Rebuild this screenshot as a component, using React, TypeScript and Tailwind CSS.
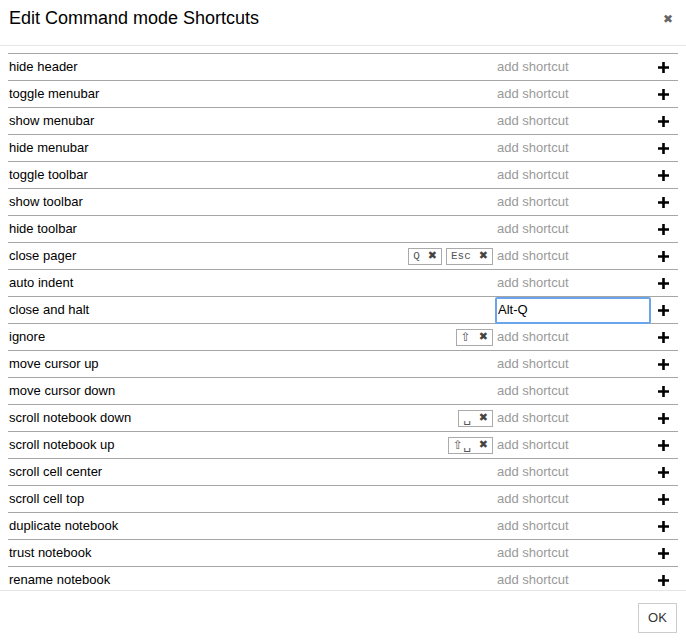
import React from "react";

type Row = { name: string; keys?: string[]; value?: string };

const rows: Row[] = [
  { name: "hide header" },
  { name: "toggle menubar" },
  { name: "show menubar" },
  { name: "hide menubar" },
  { name: "toggle toolbar" },
  { name: "show toolbar" },
  { name: "hide toolbar" },
  { name: "close pager", keys: ["Q", "Esc"] },
  { name: "auto indent" },
  { name: "close and halt", value: "Alt-Q" },
  { name: "ignore", keys: ["⇧"] },
  { name: "move cursor up" },
  { name: "move cursor down" },
  { name: "scroll notebook down", keys: ["␣"] },
  { name: "scroll notebook up", keys: ["⇧␣"] },
  { name: "scroll cell center" },
  { name: "scroll cell top" },
  { name: "duplicate notebook" },
  { name: "trust notebook" },
  { name: "rename notebook" },
];

function KeyBadge({ k }: { k: string }) {
  // symbol keys (shift / space) need a font that draws them at full size
  const symbol = /[^\x00-\x7f]/.test(k);
  return (
    <span className="flex h-[17px] items-center gap-[8px] border border-[#aaa] px-[4px] text-[#555]">
      {symbol ? (
        <span className="font-['DejaVu_Sans',sans-serif] text-[12px] leading-none">{k}</span>
      ) : (
        <span className="font-['Liberation_Mono',monospace] text-[11px]">{k}</span>
      )}
      <span className="font-['DejaVu_Sans',sans-serif] text-[11px] font-bold text-[#444]">✖</span>
    </span>
  );
}

function ShortcutRow({ row }: { row: Row }) {
  return (
    <div className="flex h-[27px] items-center border-t border-[#a6a6a6]">
      <span className="flex-1 pl-[1px] text-[13px] text-[#000]">{row.name}</span>
      {row.keys && (
        <div className="mr-[2px] flex gap-[4px]">
          {row.keys.map((k) => (
            <KeyBadge key={k} k={k} />
          ))}
        </div>
      )}
      {row.value ? (
        <div className="flex h-[27px] w-[156px] items-center rounded-[2px] border-2 border-[#6aa5ec] pl-[1px] text-[13px] text-[#000]">
          {row.value}
        </div>
      ) : (
        <div className="w-[156px] pl-[2px] text-[13px] text-[#999]">add shortcut</div>
      )}
      <div className="flex w-[27px] justify-center pr-[3px]">
        <svg width="11" height="11" viewBox="0 0 11 11">
          <path d="M4.2 0h2.6v4.2H11v2.6H6.8V11H4.2V6.8H0V4.2h4.2z" fill="#000" />
        </svg>
      </div>
    </div>
  );
}

export default function App() {
  return (
    <div className="flex h-[643px] w-[686px] flex-col bg-white font-['Liberation_Sans',Arial,sans-serif]">
      <div className="flex h-[46px] shrink-0 items-center justify-between border-b border-[#e5e5e5] pl-[9px] pr-[13px]">
        <h4 className="pb-[8px] text-[18px] text-[#000]">Edit Command mode Shortcuts</h4>
        <span className="pb-[8px] font-['DejaVu_Sans',sans-serif] text-[12px] font-bold text-[#666]">✖</span>
      </div>
      <div className="h-[545px] shrink-0 overflow-hidden border-b border-[#e5e5e5] px-[8px] pt-[7px]">
        {rows.map((r) => (
          <ShortcutRow key={r.name} row={r} />
        ))}
      </div>
      <div className="flex flex-1 items-center justify-end pr-[9px]">
        <button className="mt-[1px] h-[30px] w-[39px] border border-[#ccc] bg-white text-[13px] text-[#333]">
          OK
        </button>
      </div>
    </div>
  );
}
